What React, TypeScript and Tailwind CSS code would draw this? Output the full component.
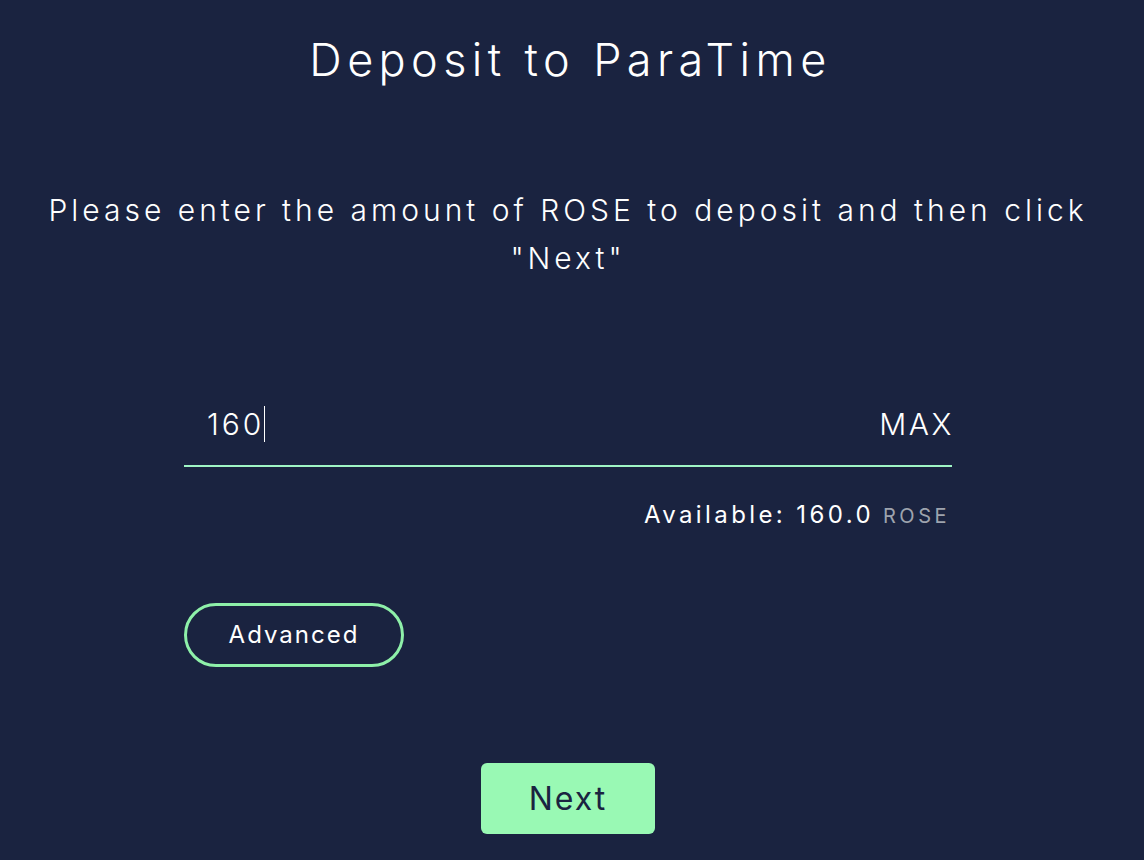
export default function App() {
  return (
    <div
      className="w-[1144px] h-[860px] bg-[#1a2340] text-white overflow-hidden"
      style={{ fontFamily: "Inter, 'Noto Sans', sans-serif" }}
    >
      <div className="w-[1136px] flex flex-col items-center">
        <h1 className="mt-[30px] pl-[5px] text-[45px] leading-[60px] font-light tracking-[5.4px]">Deposit to ParaTime</h1>
        <p className="mt-[96px] w-[1100px] text-center text-[30px] leading-[48px] font-light tracking-[4px]">
          Please enter the amount of ROSE to deposit and then click "Next"
        </p>
        <div className="mt-[101px] w-[768px] flex flex-col">
          <div className="flex items-center justify-between pl-[23px] h-[84px] border-b-2 border-[#9ff5c5]">
            <div className="flex items-center text-[30px] font-light tracking-[3px]">
              <span>160</span>
              <span className="w-[1px] h-[36px] bg-white" />
            </div>
            <span className="text-[30px] font-light tracking-[2.6px] mr-[-2px]">MAX</span>
          </div>
          <div className="mt-[30px] flex justify-end items-baseline pr-[2px] text-[24px] tracking-[3.4px]">
            <span>Available: 160.0</span>
            <span className="ml-[9px] text-[20px] text-[#9ea3ae] tracking-[3.5px]">ROSE</span>
          </div>
          <button className="mt-[70px] w-[220px] h-[64px] rounded-full border-[3px] border-[#8ef0a9] text-[24px] tracking-[2px] text-white">
            Advanced
          </button>
        </div>
        <button className="mt-[96px] w-[174px] h-[71px] rounded-[6px] bg-[#99f9b4] text-[#1a2340] text-[32px] tracking-[2px]">
          Next
        </button>
      </div>
    </div>
  );
}
